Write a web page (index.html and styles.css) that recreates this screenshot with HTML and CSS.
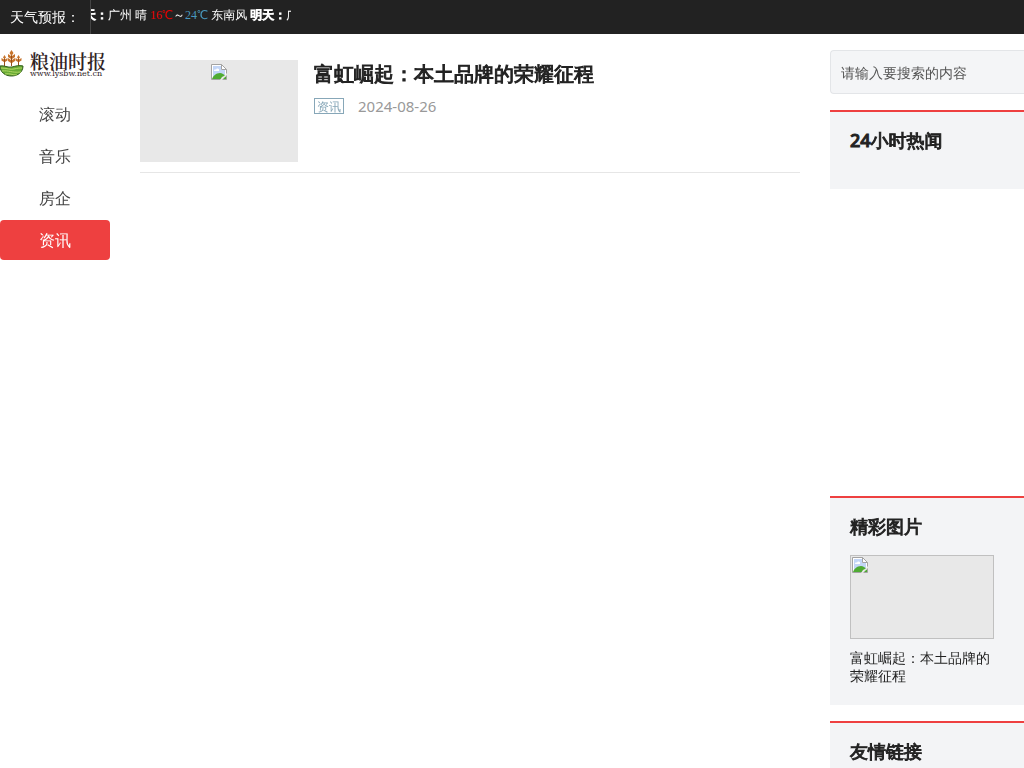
FILE: index.html
```html
<!DOCTYPE html>
<html lang="zh-CN">
<head>
<meta charset="utf-8">
<meta name="viewport" content="width=device-width, initial-scale=1">
<title>粮油时报 - 资讯</title>
<link rel="stylesheet" href="styles.css">
</head>
<body>
<svg class="defs" width="0" height="0" aria-hidden="true">
  <symbol id="missing" viewBox="0 0 16 16">
    <path d="M.5.5h10l5 5v10H.5z" fill="#fff" stroke="#a3a3a3"/>
    <path d="M2 2h8v4h4v8H2z" fill="#c3d6f7"/>
    <path d="M3 7c0-2 2-2 2-1 0-2 4-2 3 1z" fill="#fff"/>
    <path d="M1 15c1-3 4-6 8-6 2 0 4 1 6 4v2z" fill="#4fab33"/>
    <path d="M10.500.500v5h5z" fill="#fff" stroke="#a3a3a3"/>
    <path d="M9 16l2-3 2-1 3-3v2l-3 3-2 2z" fill="#e8e8e8"/>
  </symbol>
</svg>
<header class="topbar">
  <span class="topbar-label">天气预报：</span>
  <div class="weather"><p class="weather-text"><b>今天：</b>广州 晴 <span class="low">16℃</span>～<span class="high">24℃</span> 东南风 <b>明天：</b>广州 晴</p></div>
</header>
<div class="page">
  <aside class="left">
    <a class="logo" href="#">
      <svg class="logo-mark" viewBox="0 0 24 28" aria-hidden="true">
        <g stroke="#98501c" stroke-width="1" fill="none"><path d="M11.500 3v13M4.500 8v8M18.500 8v8"/></g>
        <g fill="#c7742c">
          <path d="M11.500 0l2 3-2 3-2-3zM8 4l3 2v3L8 7zM15 4l-3 2v3l3-2zM8 8l3 2v3l-3-2zM15 8l-3 2v3l3-2z"/>
          <path d="M4.500 5L6 7.500 4.500 9 3 7.500zM1.500 8L4 9.500V12l-2.500-1.500zM7.500 8L5 9.500V12l2.500-1.500z"/>
          <path d="M18.500 5L20 7.500 18.500 9 17 7.500zM15.500 8l2.500 1.500V12l-2.500-1.500zM21.500 8L19 9.500V12l2.500-1.500z"/>
        </g>
        <path d="M0 16c4-1 8 2 12 1s7-2 11-1c0 6-5 10-11.500 10S0 22 0 16z" fill="#69ac35" stroke="#305c1c"/>
        <path d="M1 18c6 0 9 2 13 1s6-1 8-1M2 21c7-1 9 2 19 1M5 24c5-1 7 1 12 1" stroke="#b2d765" fill="none"/>
      </svg>
      <span class="logo-words"><span class="logo-name">粮油时报</span><span class="logo-url">www.lysbw.net.cn</span></span>
    </a>
    <nav class="menu">
      <a href="#">滚动</a>
      <a href="#">音乐</a>
      <a href="#">房企</a>
      <a class="active" href="#">资讯</a>
    </nav>
  </aside>
  <main class="main">
    <article class="post">
      <a class="post-thumb" href="#" aria-label="富虹崛起：本土品牌的荣耀征程"><svg class="missing"><use href="#missing"/></svg></a>
      <div class="post-body">
        <h2 class="post-title"><a href="#">富虹崛起：本土品牌的荣耀征程</a></h2>
        <div class="post-meta"><a class="tag" href="#">资讯</a><time datetime="2024-08-26">2024-08-26</time></div>
      </div>
    </article>
  </main>
  <aside class="right">
    <form class="search"><input type="search" aria-label="搜索" placeholder="请输入要搜索的内容"></form>
    <section class="card card-hot"><h3>24小时热闻</h3></section>
    <div class="slot"></div>
    <section class="card card-pics">
      <h3>精彩图片</h3>
      <a class="pic" href="#"><span class="pic-frame"><svg class="missing"><use href="#missing"/></svg></span><span class="pic-title">富虹崛起：本土品牌的荣耀征程</span></a>
    </section>
    <section class="card"><h3>友情链接</h3></section>
  </aside>
</div>
</body>
</html>
```
FILE: styles.css
```css
* { box-sizing: border-box; }
body {
  margin: 0;
  background: #fff;
  color: #222;
  font: 14px/18px "Noto Sans", "WenQuanYi Zen Hei", "Noto Sans CJK SC", sans-serif;
}
a { color: inherit; text-decoration: none; }
h2, h3, p { margin: 0; }
h2, h3 { font-weight: 500; -webkit-text-stroke: 1px; }
.defs { position: absolute; }

.topbar { display: flex; height: 34px; background: #222; color: #fff; }
.topbar-label { width: 91px; padding-left: 10px; border-right: 1px solid #444; line-height: 34px; white-space: nowrap; }
.weather { width: 200px; overflow: hidden; }
.weather-text {
  margin-left: -19px;
  font: 12px/30px "Liberation Serif", "WenQuanYi Zen Hei", "Noto Sans CJK SC", serif;
  white-space: nowrap;
}
.weather-text b { -webkit-text-stroke: 1px; }
.low { color: #f00000; }
.high { color: #4899be; }

.page { display: flex; gap: 30px; padding-top: 16px; }
.left { width: 110px; flex: none; }
.logo { display: flex; gap: 6px; height: 28px; }
.logo-mark { width: 24px; height: 28px; flex: none; }
.logo-words { display: flex; flex-direction: column; padding-top: 1px; color: #30231f; white-space: nowrap; }
.logo-name { font: 600 19px/19px "Noto Serif CJK SC", "Liberation Serif", serif; }
.logo-url { font: 8px/8px "DejaVu Serif", serif; }
.menu { display: grid; gap: 2px; margin-top: 16px; }
.menu a { border-radius: 4px; color: #444; font-size: 16px; line-height: 40px; text-align: center; }
.menu .active { background: #ee4040; color: #fff; }

.main { flex: 1; min-width: 0; padding-top: 10px; }
.post { display: flex; gap: 16px; padding-bottom: 10px; border-bottom: 1px solid #e6e6e6; }
.post-thumb { width: 158px; height: 102px; padding-top: 4px; flex: none; background: #e8e8e8; text-align: center; }
.missing { display: inline-block; width: 16px; height: 16px; vertical-align: top; }
.post-title { font-size: 20px; line-height: 28px; }
.post-meta { display: flex; align-items: center; gap: 14px; margin-top: 8px; color: #999; font-size: 15px; line-height: 20px; }
.tag { height: 16px; padding: 0 2px; border: 1px solid #87a7b8; color: #87a7b8; font-size: 12px; line-height: 16px; }

.right { display: flex; flex-direction: column; gap: 16px; width: 194px; flex: none; }
.search input {
  display: block;
  width: 100%;
  height: 44px;
  padding: 0 10px;
  border: 1px solid #e3e5e8;
  border-right: 0;
  border-radius: 4px 0 0 4px;
  background: #f4f5f7;
  font: inherit;
  appearance: none;
}
.search input::placeholder { color: #555; opacity: 1; }
.card { padding: 16px 30px 20px 20px; border-top: 2px solid #ee4040; background: #f3f4f6; }
.card h3 { font-size: 18px; line-height: 25px; white-space: nowrap; }
.card-hot { padding-bottom: 36px; }
.slot { height: 275px; }
.pic { display: block; margin-top: 16px; }
.pic-frame { display: block; height: 84px; padding: 1px; border: 1px solid #c0c0c0; background: #e8e8e8; }
.pic-title { display: block; margin-top: 10px; }
```
